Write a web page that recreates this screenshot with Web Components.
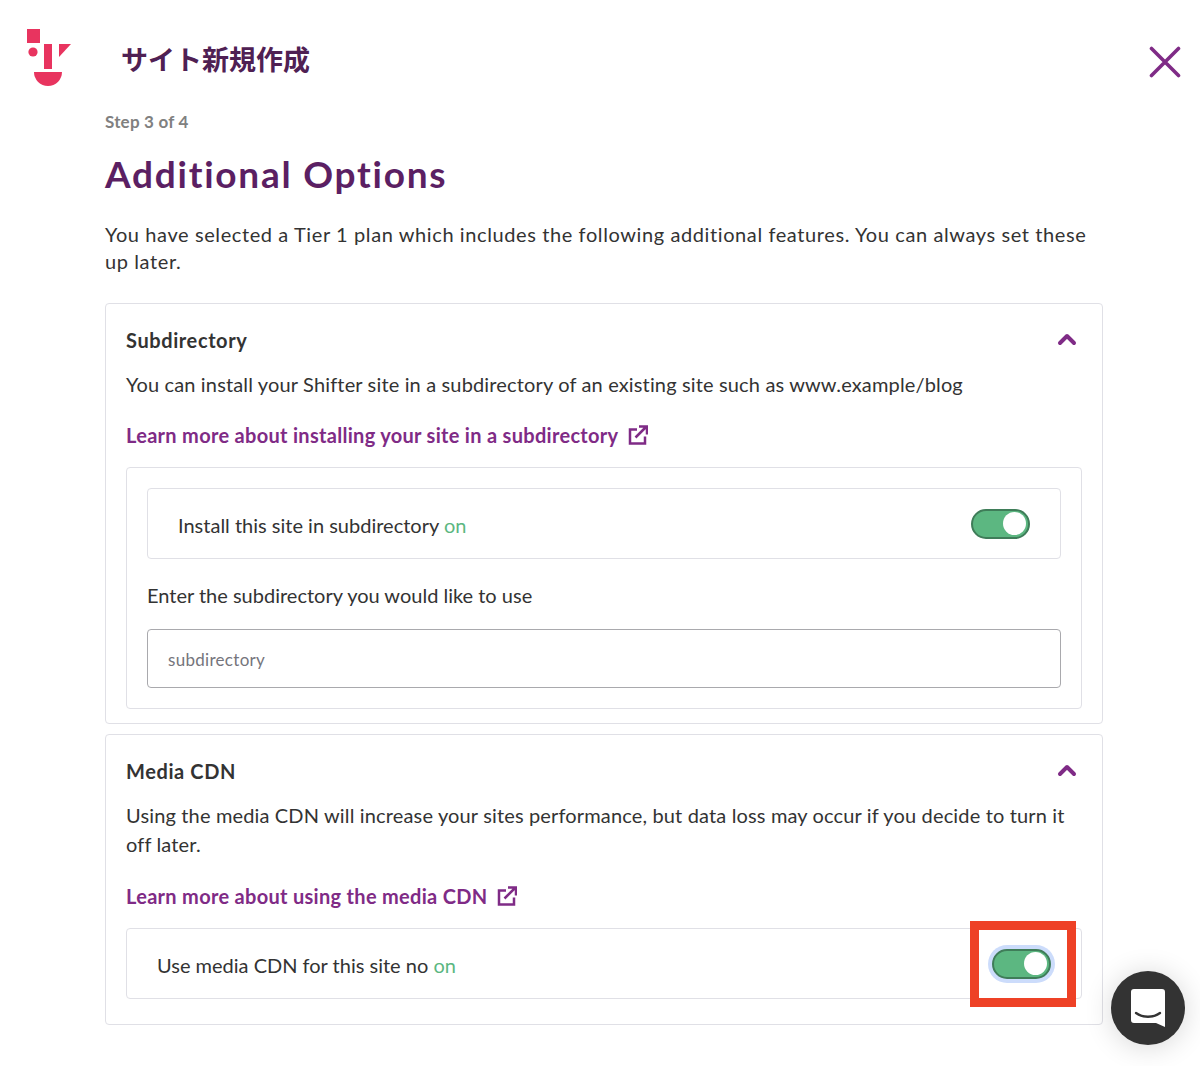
<!doctype html>
<html lang="en"><head><meta charset="utf-8">
<style>
html,body{margin:0;padding:0;background:#fff}
body{width:1200px;height:1066px;overflow:hidden;position:relative;font-family:Lato,"Noto Sans CJK JP",sans-serif;color:#333;font-size:20px}
</style></head><body>
<template id="t-header"><style>
:host{display:flex;height:112px;box-sizing:border-box;position:relative}
svg.logo{position:absolute;left:27px;top:29px}
h1{margin:32px 0 0 121px;font:700 27px/54px "Noto Sans CJK JP",sans-serif;height:54px;color:#4f2053}
.x{position:absolute;left:1149px;top:46px}
</style>
<svg class="logo" width="46" height="58" viewBox="27 29 46 58"><rect x="27" y="29" width="13" height="14" fill="#e8345f"/><circle cx="33" cy="52" r="4.6" fill="#e8345f"/><rect x="44" y="44" width="8" height="25" fill="#e8345f"/><path d="M59 44h12L59 57z" fill="#e8345f"/><path d="M34 72h28a14 14 0 0 1-28 0z" fill="#e8345f"/></svg>
<h1>サイト新規作成</h1>
<svg class="x" width="32" height="32" viewBox="0 0 32 32"><path d="M2.500 2.500l27 27M29.500 2.500l-27 27" stroke="#7f2b86" stroke-width="3.600" fill="none" stroke-linecap="round"/></svg>
</template>
<template id="t-card"><style>
:host{display:block;box-sizing:border-box;border:1px solid #e0e0e6;border-radius:4px;padding:20px;position:relative;background:#fff}
.t{font-weight:700;font-size:20px;line-height:32px;color:#333;letter-spacing:.6px;height:32px}
.c{position:absolute;right:25px;top:28px}
.d{margin-top:14px;line-height:29px;font-size:20px;letter-spacing:.15px}
</style><div class="t"><slot name="title"></slot></div>
<svg class="c" width="20" height="14" viewBox="0 0 20 14"><path d="M3 11l7-7 7 7" stroke="#7f2b86" stroke-width="4" fill="none" stroke-linecap="round" stroke-linejoin="round"/></svg>
<div class="d"><slot name="desc"></slot></div><slot></slot></template>
<template id="t-link"><style>
:host{display:flex;align-items:center;gap:10px;font-weight:700;font-size:20px;color:#7f2b86;letter-spacing:.3px;line-height:32px;height:32px}
</style><slot></slot><svg width="20" height="20" viewBox="0 0 20 20" fill="none" stroke="#7f2b86" stroke-width="2.500"><path d="M9 4.500H2v14h15V11.500M7.500 12.500L18.500 1.500M11 1.500h8v8"/></svg></template>
<template id="t-toggle"><style>
:host{display:block;width:59px;height:30px;box-sizing:border-box;border:2px solid #3f7d59;border-radius:15px;background:#5cb781;position:relative}
:host([focus]){box-shadow:0 0 0 4px #ccdcfb}
i{position:absolute;right:2px;top:1.500px;width:23px;height:23px;border-radius:50%;background:#fff}
</style><i></i></template>
<template id="t-row"><style>
:host{display:flex;align-items:center;justify-content:space-between;box-sizing:border-box;border:1px solid #e0e0e6;border-radius:4px;height:71px;padding:0 30px;font-size:20px;letter-spacing:0;background:#fff}
span{padding-top:3px}
</style><span><slot></slot></span><slot name="ctl"></slot></template>
<template id="t-chat"><style>
:host{position:absolute;left:1111px;top:971px;width:74px;height:74px;border-radius:50%;background:#333;box-shadow:0 2px 28px rgba(0,0,0,.16);display:flex;align-items:center;justify-content:center}
</style><svg width="36" height="40" viewBox="0 0 36 40"><path d="M4 1h28a3 3 0 0 1 3 3v35l-9-4H4a3 3 0 0 1-3-3V4a3 3 0 0 1 3-3z" fill="#fff"/><path d="M6 25c7 5 17 5 24 0" stroke="#333" stroke-width="2.400" fill="none" stroke-linecap="round"/></svg></template>
<template id="t-mark"><style>:host{position:absolute;left:970px;top:921px;width:106px;height:86px;box-sizing:border-box;border:9px solid #ee4126;pointer-events:none}</style></template>

<x-header></x-header>
<main style="margin:0 97px 0 105px">
<div style="font-weight:700;font-size:17px;line-height:20px;color:#808080;letter-spacing:.2px">Step 3 of 4</div>
<h2 style="margin:19px 0 0;font:700 37px/46px Lato,sans-serif;color:#5b1f63;letter-spacing:1.75px">Additional Options</h2>
<p style="margin:24px 0 28px;line-height:27px;letter-spacing:.6px">You have selected a Tier 1 plan which includes the following additional features. You can always set these up later.</p>
<x-card style="height:421px"><span slot="title">Subdirectory</span><span slot="desc">You can install your Shifter site in a subdirectory of an existing site such as www.example/blog</span>
<x-link style="margin-top:20px">Learn more about installing your site in a subdirectory</x-link>
<div style="margin-top:16px;border:1px solid #e0e0e6;border-radius:4px;padding:20px;height:242px;box-sizing:border-box">
<x-row>Install this site in subdirectory <span style="color:#5cb781">on</span><x-toggle slot="ctl"></x-toggle></x-row>
<div style="margin-top:21px;line-height:30px">Enter the subdirectory you would like to use</div>
<div style="margin-top:19px;height:59px;box-sizing:border-box;border:1px solid #a9a9ad;border-radius:4px;padding:2px 20px 0;display:flex;align-items:center;font-size:17px;color:#75757c;letter-spacing:.3px">subdirectory</div>
</div></x-card>
<x-card style="height:291px;margin-top:10px"><span slot="title">Media CDN</span><span slot="desc">Using the media CDN will increase your sites performance, but data loss may occur if you decide to turn it off later.</span>
<x-link style="margin-top:21px">Learn more about using the media CDN</x-link>
<x-row style="margin-top:16px">Use media CDN for this site no <span style="color:#5cb781">on</span><x-toggle slot="ctl" focus></x-toggle></x-row>
</x-card>
</main>
<x-mark></x-mark><x-chat></x-chat>
<script>
for(const [n,id] of [['x-header','t-header'],['x-card','t-card'],['x-link','t-link'],['x-toggle','t-toggle'],['x-row','t-row'],['x-chat','t-chat'],['x-mark','t-mark']]){
customElements.define(n,class extends HTMLElement{constructor(){super();this.attachShadow({mode:'open'}).append(document.getElementById(id).content.cloneNode(true))}})}
</script>
</body></html>
